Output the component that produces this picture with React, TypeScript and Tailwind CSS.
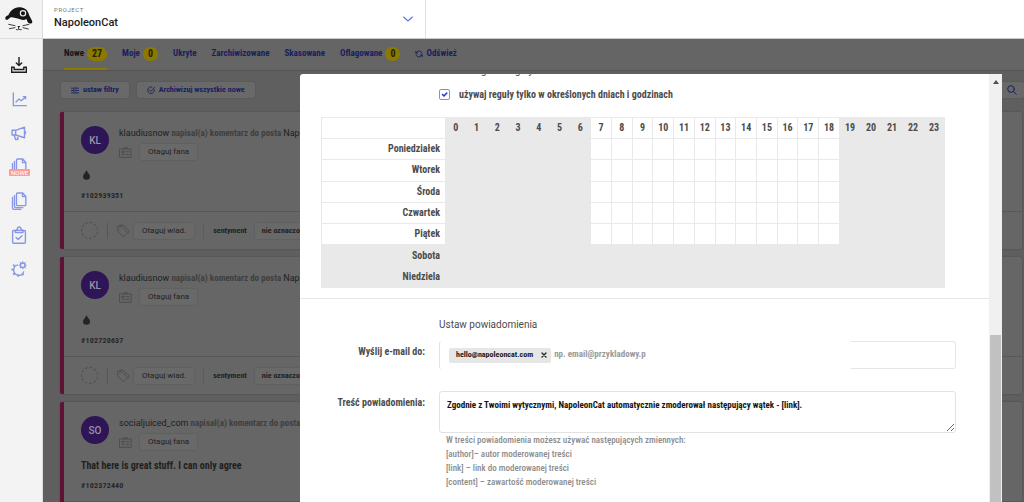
import React from "react";

const cond = "font-['Roboto_Condensed',Roboto,'Noto_Sans',sans-serif]";

type IconProps = { className?: string };

const line = {
  fill: "none",
  stroke: "currentColor",
  strokeLinecap: "round" as const,
  strokeLinejoin: "round" as const,
};

function CatLogo() {
  return (
    <svg viewBox="0 0 84 72" className="h-6 w-7" aria-hidden="true">
      <path
        d="M1 35 C0 30 4 27 10 25 C16 12 26 1 42 1 C58 1 67 8 71 20 C74 31 83 40 82 46 C80 52 72 50 68 45 C66 42 66 38 64 36 C60 40 52 40 45 37 C36 34 26 31 19 31 C14 31 12 37 8 38 C4 39 1 38 1 35Z"
        fill="#161616"
      />
      <circle cx="54" cy="19" r="8" fill="none" stroke="#f3f3f3" strokeWidth="3.500" />
      <path
        d="M11 52 L30 56 M13 65 L30 62 M54 56 L72 52 M54 62 L70 66 M41 60 L41 66 M34 68 Q39 70 41 66 Q44 70 49 68"
        {...line}
        stroke="#1c1c1c"
        strokeWidth="2.500"
      />
      <path d="M37 57 L46 57 L41 62Z" fill="#1c1c1c" />
    </svg>
  );
}

function InboxIcon() {
  return (
    <svg viewBox="0 0 45 45" className="size-4" {...line} strokeWidth="4">
      <path d="M22.500 1V23M15 17l7.500 7 7.500-7" />
      <path d="M9 29H2V43H43V29H36M9 29V35H36V29" strokeLinejoin="miter" />
    </svg>
  );
}

function ChartIcon() {
  return (
    <svg viewBox="0 0 45 45" className="size-[15px]" {...line} strokeWidth="4">
      <path d="M4 3V41H43" />
      <path d="M12 30l9-9 7 5 13-11M34 14h7v6" />
    </svg>
  );
}

function MegaphoneIcon() {
  return (
    <svg viewBox="0 0 45 45" className="size-4" {...line} strokeWidth="4">
      <path d="M3 15H13L38 6V36L13 28H3Z M13 15V28 M38 17q6 4 0 9M9 29l4 12 7-1-3-10" />
    </svg>
  );
}

function PagesIcon() {
  return (
    <svg viewBox="0 0 45 54" className="h-[18px] w-4" {...line} strokeWidth="4">
      <path d="M18 3H34L43 13V38q0 3-3 3H18q-3 0-3-3V6q0-3 3-3ZM33 4V14H42" />
      <path d="M9 10V43q0 4 4 4H34M3 16V48q0 4 4 4H28" />
    </svg>
  );
}

function ClipboardIcon() {
  return (
    <svg viewBox="0 0 45 52" className="h-[18px] w-4" {...line} strokeWidth="4">
      <path d="M7 13H38q3 0 3 3V47q0 3-3 3H7q-3 0-3-3V16q0-3 3-3Z" />
      <path d="M12 19V13l6-4q0-6 5-6t5 6l6 4v6ZM14 33l6 6 11-11" />
    </svg>
  );
}

function GearsIcon() {
  return (
    <svg viewBox="0 0 45 45" className="size-4" fill="none" stroke="currentColor">
      <path d="M20 11A14.500 14.500 0 1 0 36 29" strokeWidth="4" />
      <path d="M10 14L6 10M6 24H1M10 34L6 38M20 39V44M31 36L35 40" strokeWidth="5" />
      <circle cx="33" cy="12" r="6.500" strokeWidth="4" />
      <path
        d="M33 5V1M33 19V23M26 12H22M40 12H44M28 7L25 4M38 7L41 4M28 17L25 20M38 17L41 20"
        strokeWidth="3"
      />
    </svg>
  );
}

function SlidersIcon() {
  return (
    <svg viewBox="0 0 24 20" className="h-[7px] w-2" {...line} strokeWidth="2.500">
      <path d="M1 3H12M18 3H23M15 0V6M1 10H5M11 10H23M8 7V13M1 17H12M18 17H23M15 14V20" />
    </svg>
  );
}

function CheckCircleIcon() {
  return (
    <svg viewBox="0 0 24 24" className="size-2" {...line} strokeWidth="2.600">
      <path d="M22 11A10 10 0 1 1 15 3M7 11l5 5L23 4" />
    </svg>
  );
}

function RefreshIcon() {
  return (
    <svg viewBox="0 0 24 24" className="size-2" {...line} strokeWidth="2.600">
      <path d="M3 10A9.500 9.500 0 0 1 21 9M21 14A9.500 9.500 0 0 1 3 15M2 4l1 6 5-1M22 20l-1-6-5 1" />
    </svg>
  );
}

function CardIcon() {
  return (
    <svg viewBox="0 0 38 33" className="h-[11px] w-[13px]" {...line} strokeWidth="3">
      <path d="M2 6H36V31H2ZM14 6V2H24V6M21 14H30M21 22H30M8 22h8M9 13h6v3h-6z" />
    </svg>
  );
}

function TagsIcon() {
  return (
    <svg viewBox="0 0 40 42" className="h-3.5 w-[13px]" {...line} strokeWidth="3">
      <path d="M2 8V21L20 39 33 26 15 8ZM8 3H19L38 22 34 27M8 14h1" />
    </svg>
  );
}

function DropIcon() {
  return (
    <svg viewBox="0 0 22 30" className="h-2.5 w-[7px]">
      <path d="M11 0C13 7 22 12 22 20A11 10 0 0 1 0 20C0 13 8 8 11 0Z" fill="#242424" />
    </svg>
  );
}

function ChevronIcon({ className }: IconProps) {
  return (
    <svg viewBox="0 0 30 16" className={className} {...line} strokeWidth="3.500">
      <path d="M2 2L15 14 28 2" />
    </svg>
  );
}

function SearchIcon() {
  return (
    <svg viewBox="0 0 30 30" className="size-2.5" {...line} strokeWidth="3">
      <circle cx="12" cy="12" r="10" />
      <path d="M19.500 19.500L28 28" />
    </svg>
  );
}

function NavItem({ label, active, badge, children }: { label: string; active?: boolean; badge?: string; children: React.ReactNode }) {
  return (
    <a
      href="#"
      aria-label={label}
      className={`relative flex h-[34px] w-full items-center justify-center pr-1 ${active ? "text-[#1f1f1f]" : "text-[#8796e6]"}`}
    >
      {children}
      {badge && (
        <span className="absolute top-[19px] left-[9px] rounded-[1px] bg-[#ff9c97] px-0.5 font-[Roboto] text-[6px] leading-[7px] text-white">
          {badge}
        </span>
      )}
    </a>
  );
}

function Tab({ label, count, active, icon }: { label: string; count?: number; active?: boolean; icon?: React.ReactNode }) {
  return (
    <button
      type="button"
      className={`flex h-full items-center gap-[3px] border-b-2 ${active ? "border-[#8c7a00] text-[#141414]" : "border-transparent text-[#17205f]"}`}
    >
      {icon}
      {label}
      {count !== undefined && (
        <span className="rounded-full bg-[#8c7a00] px-[5px] text-[10px] leading-[14px] text-[#242000]">{count}</span>
      )}
    </button>
  );
}

const softButton = "rounded-[2px] bg-[#696969] shadow-[0_0_2px_rgba(0,0,0,0.2)]";

function MessageCard({ initials, author, id, text }: { initials: string; author: string; id: string; text?: string }) {
  return (
    <article className="rounded-[2px] border-l-4 border-[#5f1233] bg-[#666666] shadow-[0_0_2px_rgba(0,0,0,0.25)]">
      <div className="h-[99px] px-[17px] pt-3.5">
        <div className="flex gap-2.5">
          <div className="flex size-7 shrink-0 items-center justify-center rounded-full bg-[#2d1556] font-[Roboto] text-[10px] font-medium text-[#9a93a8]">
            {initials}
          </div>
          <div className="min-w-0">
            <p className="text-[9px] leading-3.5 font-bold whitespace-nowrap text-[#3f3f3f]">
              <span className="font-[Roboto] font-normal text-[#202020]">{author}</span> napisał(a) komentarz do posta{" "}
              <span className="font-[Roboto] font-normal text-[#202020]">NapoleonCat</span>
            </p>
            <div className="mt-1 flex items-center gap-2 text-[#4e4e4e]">
              <CardIcon />
              <button type="button" className={`${softButton} h-4 px-2 font-[Roboto] text-[8px] text-[#1f1f1f]`}>
                Otaguj fana
              </button>
            </div>
          </div>
        </div>
        <div className="mt-2 flex h-3.5 items-center text-[10px] font-bold text-[#1f1f1f]">
          {text ?? <span className="pl-0.5"><DropIcon /></span>}
        </div>
        <p className="mt-2 text-[8px] leading-3 font-bold tracking-wide text-[#262626]">{id}</p>
      </div>
      <div className="flex h-[38px] items-center border-t border-[#585858] pl-[17px] text-[#4e4e4e]">
        <span className="size-[17px] rounded-full border border-dashed border-[#4e4e4e]" />
        <span className="mx-[9px] h-4 w-px bg-[#555555]" />
        <TagsIcon />
        <button type="button" className={`${softButton} ml-1 h-4 px-2 font-[Roboto] text-[8px] text-[#1f1f1f]`}>
          Otaguj wiad.
        </button>
        <span className="mx-[9px] h-4 w-px bg-[#5c5c5c]" />
        <span className="text-[8px] font-bold text-[#1f1f1f]">sentyment</span>
        <button type="button" className={`${softButton} ml-2 h-4 px-[7px] text-[8px] font-bold text-[#1f1f1f]`}>
          nie oznaczono
        </button>
      </div>
    </article>
  );
}

const days = ["Poniedziałek", "Wtorek", "Środa", "Czwartek", "Piątek", "Sobota", "Niedziela"];
const hours = Array.from({ length: 24 }, (_, hour) => hour);
const isWorkHour = (hour: number) => hour >= 7 && hour <= 18;

function Schedule() {
  return (
    <table className="h-[171px] w-full table-fixed border-collapse text-[10px] font-bold text-[#4c4c4c]">
      <colgroup>
        <col className="w-[124px]" />
        {hours.map((hour) => (
          <col key={hour} className={hour > 18 ? "w-[21px]" : ""} />
        ))}
      </colgroup>
      <thead>
        <tr className="h-[21px]">
          <td className="border border-[#e9e9e9]" />
          {hours.map((hour) => (
            <th key={hour} scope="col" className={`border border-[#e9e9e9] p-0 leading-4 ${isWorkHour(hour) ? "" : "bg-[#e9e9e9]"}`}>
              {hour}
            </th>
          ))}
        </tr>
      </thead>
      <tbody>
        {days.map((day, index) => (
          <tr key={day} className={`h-[21px] ${index > 4 ? "bg-[#e9e9e9]" : ""}`}>
            <th scope="row" className="border border-[#e9e9e9] p-0 pr-[5px] text-right leading-4">
              {day}
            </th>
            {hours.map((hour) => (
              <td key={hour} className={`border border-[#e9e9e9] ${isWorkHour(hour) ? "" : "bg-[#e9e9e9]"}`} />
            ))}
          </tr>
        ))}
      </tbody>
    </table>
  );
}

function RuleDialog() {
  return (
    <section role="dialog" aria-label="Reguła" className="absolute top-[35px] right-[22px] bottom-0 left-[257px] flex overflow-hidden rounded-tl-[3px] bg-white">
      <div className="min-w-0 flex-1">
        <div className="pr-11 pl-[21px]">
          <div className="h-[13px] overflow-hidden pl-[118px]">
            <p className="-mt-[9px] font-[Roboto] text-[10px] leading-3 text-[#4c4c4c]">Harmonogram reguły</p>
          </div>
          <label className="ml-[118px] flex h-3.5 items-center gap-[9px] text-[10px] font-bold text-[#4c4c4c]">
            <span className="relative flex size-[11px]">
              <input
                type="checkbox"
                defaultChecked
                className="peer size-[11px] appearance-none rounded-[2px] border border-[#7d8fec] bg-white"
              />
              <svg viewBox="0 0 11 11" className="pointer-events-none absolute inset-0 hidden size-[11px] peer-checked:block" {...line} strokeWidth="1.600">
                <path d="M3.500 5.500l1.500 1.500 2.800-3" stroke="#2439c4" />
              </svg>
            </span>
            używaj reguły tylko w określonych dniach i godzinach
          </label>
          <div className="mt-4">
            <Schedule />
          </div>
        </div>
        <form className="mt-2.5 grid grid-cols-[125px_1fr] gap-x-3.5 border-t border-[#e6e6e6] pr-[33px] text-[10px] font-bold text-[#4c4c4c]">
          <h2 className="col-start-2 mt-[18px] mb-2 font-[Roboto] text-[10px] leading-4 font-normal">Ustaw powiadomienia</h2>
          <label htmlFor="email" className="mt-[3px] text-right leading-4">
            Wyślij e-mail do:
          </label>
          <div className="flex h-7">
            <div className="flex w-[412px] items-center rounded-l-[3px] border-l border-[#e2e2e2] pl-[9px]">
              <span className="flex h-[15px] items-center gap-2 rounded-[2px] bg-[#e6e6e6] pr-1 pl-[7px] text-[8px] text-[#1a1a1a]">
                hello@napoleoncat.com
                <button type="button" aria-label="Usuń">
                  <svg viewBox="0 0 6 6" className="size-1.5" {...line} strokeWidth="1.200">
                    <path d="M1 1l4 4M5 1L1 5" />
                  </svg>
                </button>
              </span>
              <input
                id="email"
                type="text"
                placeholder="np. email@przykladowy.pl"
                className="ml-[3px] w-[92px] text-[9px] font-bold outline-none placeholder:text-[#9b9b9b]"
              />
            </div>
            <div className="flex-1 rounded-r-[3px] border border-l-0 border-[#e6e6e6]" />
          </div>
          <label htmlFor="content" className="mt-[26px] text-right leading-4">
            Treść powiadomienia:
          </label>
          <div className="mt-[22px]">
            <textarea
              id="content"
              defaultValue="Zgodnie z Twoimi wytycznymi, NapoleonCat automatycznie zmoderował następujący wątek - [link]."
              className="block h-[42px] w-full rounded-[3px] border border-[#e2e2e2] px-[7px] py-1.5 text-[9px] leading-3.5 font-bold text-[#141414] outline-none"
            />
            <div className="pl-[7px] text-[9px] leading-3.5 font-medium text-[#8c8c8c]">
              <p>W treści powiadomienia możesz używać następujących zmiennych:</p>
              <p>[author]– autor moderowanej treści</p>
              <p>[link] – link do moderowanej treści</p>
              <p>[content] – zawartość moderowanej treści</p>
            </div>
          </div>
        </form>
      </div>
      <div className="flex w-[13px] shrink-0 flex-col items-center bg-[#f0f0f0]">
        <svg viewBox="0 0 6 4" className="mt-1.5 h-1 w-1.5">
          <path d="M0 4L3 0 6 4Z" fill="#505050" />
        </svg>
        <div className="mt-[251px] w-[11px] flex-1 bg-[#c1c1c1]" />
      </div>
    </section>
  );
}

export default function App() {
  return (
    <div className={`flex h-screen overflow-hidden bg-white ${cond}`}>
      <nav className="flex w-[43px] shrink-0 flex-col border-r border-[#dddddd] bg-[#f3f3f3]">
        <a href="#" aria-label="NapoleonCat" className="flex h-[39px] items-center justify-center border-b border-[#dddddd] pr-1">
          <CatLogo />
        </a>
        <div className="flex flex-col pt-[9px]">
          <NavItem label="Skrzynka" active><InboxIcon /></NavItem>
          <NavItem label="Analityka"><ChartIcon /></NavItem>
          <NavItem label="Kampanie"><MegaphoneIcon /></NavItem>
          <NavItem label="Publikacje" badge="NOWE"><PagesIcon /></NavItem>
          <NavItem label="Raporty"><PagesIcon /></NavItem>
          <NavItem label="Zadania"><ClipboardIcon /></NavItem>
          <NavItem label="Ustawienia"><GearsIcon /></NavItem>
        </div>
      </nav>

      <div className="flex min-w-0 flex-1 flex-col">
        <header className="flex h-[39px] shrink-0 border-b border-[#cccccc]">
          <div className="relative flex w-[383px] flex-col justify-center border-r border-[#e0e0e0] pl-[11px] font-[Roboto]">
            <label htmlFor="project" className="text-[6px] leading-2 tracking-widest text-[#777777]">
              PROJECT
            </label>
            <select id="project" className="w-full appearance-none text-[11px] leading-[18px] font-medium text-[#1c1c1c] outline-none">
              <option>NapoleonCat</option>
            </select>
            <ChevronIcon className="pointer-events-none absolute top-4 right-3 h-1.5 w-2.5 text-[#6679dd]" />
          </div>
        </header>

        <main className="relative min-h-0 flex-1 overflow-hidden bg-[#5f5f5f]">
          <div className="flex h-8 gap-[15px] border-b border-[#555555] bg-[#656565] pl-[21px] text-[9px] font-bold">
            <Tab label="Nowe" count={27} active />
            <Tab label="Moje" count={0} />
            <Tab label="Ukryte" />
            <Tab label="Zarchiwizowane" />
            <Tab label="Skasowane" />
            <Tab label="Oflagowane" count={0} />
            <Tab label="Odśwież" icon={<RefreshIcon />} />
          </div>
          <div className="flex gap-2 pt-[11px] pl-[18px] text-[8px] font-bold text-[#17205f]">
            <button type="button" className={`${softButton} flex h-4 items-center gap-1 px-2.5`}>
              <SlidersIcon />
              ustaw filtry
            </button>
            <button type="button" className={`${softButton} flex h-4 items-center gap-1 px-2.5`}>
              <CheckCircleIcon />
              Archiwizuj wszystkie nowe
            </button>
            <button type="button" aria-label="Szukaj" className={`${softButton} ml-auto flex h-4 w-6 items-center justify-center`}>
              <SearchIcon />
            </button>
          </div>
          <div className="flex flex-col gap-2 pt-3.5 pr-0.5 pl-[17px]">
            <MessageCard initials="KL" author="klaudiusnow" id="#102939351" />
            <MessageCard initials="KL" author="klaudiusnow" id="#102720637" />
            <MessageCard initials="SO" author="socialjuiced_com" id="#102372440" text="That here is great stuff. I can only agree" />
          </div>
          <RuleDialog />
        </main>
      </div>
    </div>
  );
}
